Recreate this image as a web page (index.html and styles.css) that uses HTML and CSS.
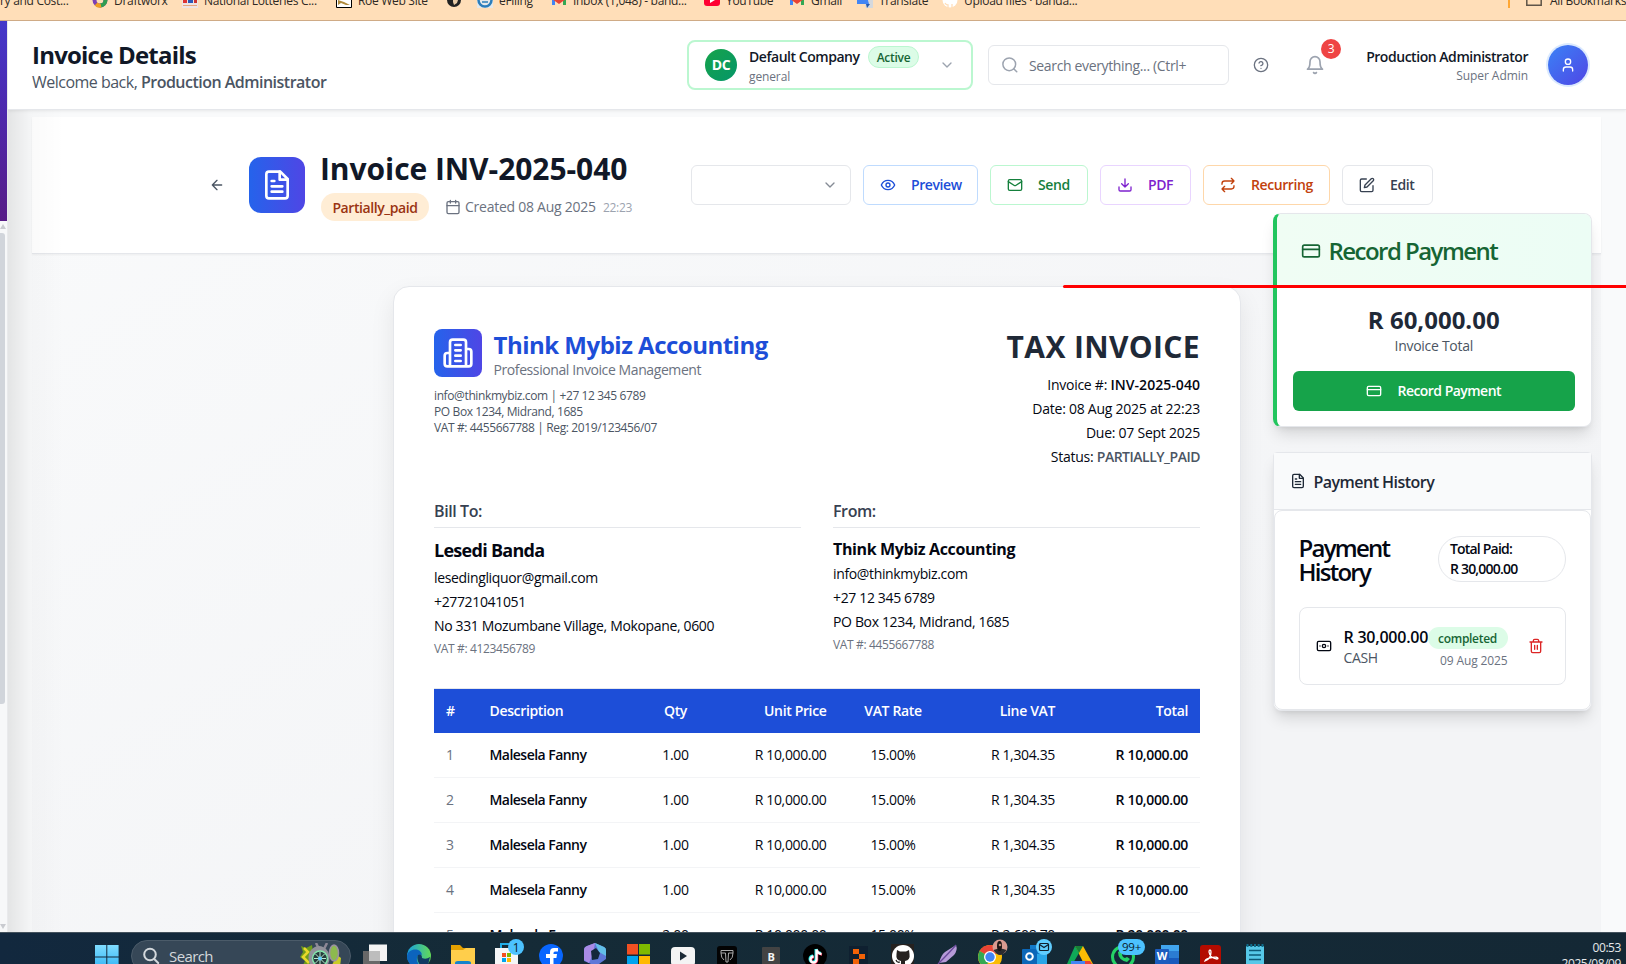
FILE: index.html
```html
<!DOCTYPE html>
<html lang="en">
<head>
<meta charset="utf-8">
<title>Invoice Details</title>
<link rel="stylesheet" href="styles.css">
</head>
<body>
<svg class="defs" width="0" height="0">
  <defs>
    <symbol id="file" viewBox="0 0 24 24"><path d="M14.5 2H6a2 2 0 0 0-2 2v16a2 2 0 0 0 2 2h12a2 2 0 0 0 2-2V7.5L14.5 2z"/><path d="M14 2v6h6M16 13H8M16 17H8M10 9H8"/></symbol>
    <symbol id="card" viewBox="0 0 24 24"><rect x="2" y="5" width="20" height="14" rx="2"/><path d="M2 10h20"/></symbol>
    <symbol id="down" viewBox="0 0 24 24"><path d="m6 9 6 6 6-6"/></symbol>
    <symbol id="gmail" viewBox="0 0 16 16"><path d="M1 4v9h3V6z" fill="#4285f4"/><path d="M15 4v9h-3V6z" fill="#34a853"/><path d="M1 3l7 5 7-5v4l-7 5-7-5z" fill="#ea4335"/></symbol>
  </defs>
</svg>
<div class="screen">
  <div class="bookmarks">
    <div class="bm"><span>ry and Cost...</span></div>
    <div class="bm"><svg viewBox="0 0 16 16"><circle cx="8" cy="8" r="5.5" fill="none" stroke="#7b3fb5" stroke-width="4"/><path d="M8 13.500A5.500 5.500 0 0 0 13.500 8" fill="none" stroke="#2f9e4f" stroke-width="4"/><path d="M4 12a5.500 5.500 0 0 0 5 1.500" fill="none" stroke="#f0a020" stroke-width="4"/></svg><span>Draftworx</span></div>
    <div class="bm"><svg viewBox="0 0 16 16"><path d="M0 0h16v16H0z" fill="#eee4e4"/><path d="M1 8h4v3H1z" fill="#d33"/><path d="M6 8h5v3H6z" fill="#2959b8"/><path d="M12 8h3v3h-3z" fill="#c33"/><path d="M1 13h14v1H1z" fill="#e8a67a"/></svg><span>National Lotteries C...</span></div>
    <div class="bm"><svg viewBox="0 0 16 16"><path d="M.5.5h15v15H.5z" fill="#fff" stroke="#000"/><path d="M2 8l6 2 6 3-4 0-5-2-3 2z" fill="#b08a3c"/></svg><span>Roe Web Site</span></div>
    <div class="bm"><svg viewBox="0 0 16 16"><circle cx="8" cy="8" r="7" fill="#222"/><path d="M7 7l5 1-1 3-3 2-1-3z" fill="#e8cba7"/></svg></div>
    <div class="bm"><svg viewBox="0 0 16 16"><path d="M0 0h16v16H0z" fill="#e4e8ea"/><circle cx="8" cy="8" r="6.500" fill="none" stroke="#2b7dbb" stroke-width="2.500"/><path d="M5 7h6M5 10h6" stroke="#2b7dbb" stroke-width="1.500"/></svg><span>eFiling</span></div>
    <div class="bm"><svg viewBox="0 0 16 16"><use href="#gmail"/></svg><span>Inbox (1,048) - band...</span></div>
    <div class="bm"><svg viewBox="0 0 16 16"><rect y="2" width="16" height="12" rx="3" fill="#f03"/><path d="M6 5l5 3-5 3z" fill="#fff"/></svg><span>YouTube</span></div>
    <div class="bm"><svg viewBox="0 0 16 16"><use href="#gmail"/></svg><span>Gmail</span></div>
    <div class="bm"><svg viewBox="0 0 16 16"><path d="M6 6h10v10H9z" fill="#d5d8dc"/><path d="M0 1h9l3 11H0z" fill="#4285f4"/><path d="M9 12l4 0-3 4z" fill="#2459b0"/></svg><span>Translate</span></div>
    <div class="bm"><svg viewBox="0 0 16 16"><circle cx="8" cy="8" r="7.500" fill="#fff"/><path d="M6 16v-3q-2 0-3-2M10 16v-4" stroke="#ffdeb8" fill="none" stroke-width="1.300"/></svg><span>Upload files · banda...</span></div>
    <div class="bm bm-all"><svg viewBox="0 0 16 16"><path d="M.8 2h14.400v11.200H.8z" fill="none" stroke="#5f5448" stroke-width="1.500"/></svg><span>All Bookmarks</span></div>
  </div>

  <div class="app">
    <aside class="sidebar"><div class="rail"></div><div class="track"><i class="up"></i><i class="thumb"></i><i class="dn"></i></div></aside>
    <div class="page">
      <header class="top">
        <div class="heading">
          <h1>Invoice Details</h1>
          <p>Welcome back, <b>Production Administrator</b></p>
        </div>
        <div class="company">
          <div class="dc">DC</div>
          <div class="company-text">
            <div class="company-row"><span class="company-name">Default Company</span><span class="active">Active</span></div>
            <div class="company-kind">general</div>
          </div>
          <svg class="ic i16 chev"><use href="#down"/></svg>
        </div>
        <div class="search">
          <svg class="ic i18" viewBox="0 0 24 24"><circle cx="11" cy="11" r="8.500"/><path d="m21 21-4-4"/></svg>
          <span>Search everything... (Ctrl+</span>
        </div>
        <svg class="ic i16 help" viewBox="0 0 24 24"><circle cx="12" cy="12" r="10"/><path d="M9.090 9a3 3 0 0 1 5.830 1c0 2-3 3-3 3M12 17h.01"/></svg>
        <div class="bell"><svg class="ic i20" viewBox="0 0 24 24"><path d="M6 8a6 6 0 0 1 12 0c0 7 3 9 3 9H3s3-2 3-9M10.300 21a1.940 1.940 0 0 0 3.400 0"/></svg><span>3</span></div>
        <div class="user"><div class="user-name">Production Administrator</div><div class="user-role">Super Admin</div></div>
        <div class="avatar"><svg class="ic i16" viewBox="0 0 24 24"><path d="M19 21v-2a4 4 0 0 0-4-4H9a4 4 0 0 0-4 4v2"/><circle cx="12" cy="7" r="4"/></svg></div>
      </header>

      <main class="main">
        <div class="canvas">
          <section class="panel">
            <svg class="ic i16 back" viewBox="0 0 24 24"><path d="m12 19-7-7 7-7M19 12H5"/></svg>
            <div class="panel-icon"><svg class="ic i32"><use href="#file"/></svg></div>
            <div class="panel-text">
              <h2>Invoice INV-2025-040</h2>
              <div class="panel-meta">
                <span class="partial">Partially_paid</span>
                <svg class="ic i16" viewBox="0 0 24 24"><rect x="3" y="4" width="18" height="18" rx="2"/><path d="M16 2v4M8 2v4M3 10h18"/></svg>
                <span class="created">Created 08 Aug 2025</span><span class="time">22:23</span>
              </div>
            </div>
            <div class="actions">
              <div class="select"><svg class="ic i16"><use href="#down"/></svg></div>
              <div class="btn preview"><svg class="ic i16" viewBox="0 0 24 24"><path d="M2 12s3-7 10-7 10 7 10 7-3 7-10 7-10-7-10-7Z"/><circle cx="12" cy="12" r="3"/></svg><span>Preview</span></div>
              <div class="btn send"><svg class="ic i16" viewBox="0 0 24 24"><rect x="2" y="4" width="20" height="16" rx="2"/><path d="m22 7-8.970 5.700a1.940 1.940 0 0 1-2.060 0L2 7"/></svg><span>Send</span></div>
              <div class="btn pdf"><svg class="ic i16" viewBox="0 0 24 24"><path d="M21 15v4a2 2 0 0 1-2 2H5a2 2 0 0 1-2-2v-4M7 10l5 5 5-5M12 15V3"/></svg><span>PDF</span></div>
              <div class="btn recurring"><svg class="ic i16" viewBox="0 0 24 24"><path d="m17 2 4 4-4 4M3 11v-1a4 4 0 0 1 4-4h14M7 22l-4-4 4-4M21 13v1a4 4 0 0 1-4 4H3"/></svg><span>Recurring</span></div>
              <div class="btn edit"><svg class="ic i16" viewBox="0 0 24 24"><path d="M11 3H4a2 2 0 0 0-2 2v15a2 2 0 0 0 2 2h15a2 2 0 0 0 2-2v-7"/><path d="M18.375 2.625a2.121 2.121 0 1 1 3 3L12 15l-4 1 1-4Z"/></svg><span>Edit</span></div>
            </div>
          </section>

          <div class="body">
            <article class="invoice">
              <div class="inv-head">
                <div>
                  <div class="brand">
                    <div class="brand-icon"><svg class="ic i32" viewBox="0 0 24 24"><path d="M6 22V4a2 2 0 0 1 2-2h8a2 2 0 0 1 2 2v18ZM6 12H4a2 2 0 0 0-2 2v6a2 2 0 0 0 2 2h2M18 9h2a2 2 0 0 1 2 2v9a2 2 0 0 1-2 2h-2M10 6h4M10 10h4M10 14h4M10 18h4"/></svg></div>
                    <div><div class="brand-name">Think Mybiz Accounting</div><div class="brand-sub">Professional Invoice Management</div></div>
                  </div>
                  <div class="brand-info"><div>info@thinkmybiz.com | +27 12 345 6789</div><div>PO Box 1234, Midrand, 1685</div><div>VAT #: 4455667788 | Reg: 2019/123456/07</div></div>
                </div>
                <div class="tax">
                  <h3>TAX INVOICE</h3>
                  <div>Invoice #: <b>INV-2025-040</b></div>
                  <div>Date: 08 Aug 2025 at 22:23</div>
                  <div>Due: 07 Sept 2025</div>
                  <div>Status: <b class="status">PARTIALLY_PAID</b></div>
                </div>
              </div>
              <div class="parties">
                <div class="party">
                  <h4>Bill To:</h4>
                  <div class="p-name big">Lesedi Banda</div>
                  <div class="p-line">lesedingliquor@gmail.com</div><div class="p-line">+27721041051</div><div class="p-line">No 331 Mozumbane Village, Mokopane, 0600</div>
                  <div class="p-vat">VAT #: 4123456789</div>
                </div>
                <div class="party">
                  <h4>From:</h4>
                  <div class="p-name">Think Mybiz Accounting</div>
                  <div class="p-line">info@thinkmybiz.com</div><div class="p-line">+27 12 345 6789</div><div class="p-line">PO Box 1234, Midrand, 1685</div>
                  <div class="p-vat">VAT #: 4455667788</div>
                </div>
              </div>
              <div class="items">
                <div class="row head"><span>#</span><span>Description</span><span class="c">Qty</span><span class="r">Unit Price</span><span class="c">VAT Rate</span><span class="r">Line VAT</span><span class="r">Total</span></div>
                <div class="row"><span class="n">1</span><span class="s d">Malesela Fanny</span><span class="c">1.00</span><span class="r">R 10,000.00</span><span class="c">15.00%</span><span class="r">R 1,304.35</span><span class="r s">R 10,000.00</span></div>
                <div class="row"><span class="n">2</span><span class="s d">Malesela Fanny</span><span class="c">1.00</span><span class="r">R 10,000.00</span><span class="c">15.00%</span><span class="r">R 1,304.35</span><span class="r s">R 10,000.00</span></div>
                <div class="row"><span class="n">3</span><span class="s d">Malesela Fanny</span><span class="c">1.00</span><span class="r">R 10,000.00</span><span class="c">15.00%</span><span class="r">R 1,304.35</span><span class="r s">R 10,000.00</span></div>
                <div class="row"><span class="n">4</span><span class="s d">Malesela Fanny</span><span class="c">1.00</span><span class="r">R 10,000.00</span><span class="c">15.00%</span><span class="r">R 1,304.35</span><span class="r s">R 10,000.00</span></div>
                <div class="row"><span class="n">5</span><span class="s d">Malesela Fanny</span><span class="c">2.00</span><span class="r">R 10,000.00</span><span class="c">15.00%</span><span class="r">R 2,608.70</span><span class="r s">R 20,000.00</span></div>
              </div>
            </article>

            <aside class="side">
              <section class="record">
                <div class="record-head"><svg class="ic i20"><use href="#card"/></svg><span>Record Payment</span></div>
                <div class="record-body">
                  <div class="amount">R 60,000.00</div>
                  <div class="amount-label">Invoice Total</div>
                  <div class="pay"><svg class="ic i16"><use href="#card"/></svg><span>Record Payment</span></div>
                </div>
              </section>
              <section class="history">
                <div class="history-head"><svg class="ic i16"><use href="#file"/></svg><span>Payment History</span></div>
                <div class="history-card">
                  <div class="history-top"><h3>Payment<br>History</h3><div class="paid">Total Paid:<br>R 30,000.00</div></div>
                  <div class="entry">
                    <svg class="ic i16" viewBox="0 0 24 24"><rect x="2" y="5" width="20" height="14" rx="2"/><circle cx="12" cy="12" r="2.500"/><path d="M6 12h.01M18 12h.01"/></svg>
                    <div class="entry-left"><div class="entry-sum">R 30,000.00</div><div class="entry-kind">CASH</div></div>
                    <div class="entry-right"><span class="done">completed</span><div class="entry-date">09 Aug 2025</div></div>
                    <svg class="ic i16 trash" viewBox="0 0 24 24"><path d="M3 6h18M19 6v14a2 2 0 0 1-2 2H7a2 2 0 0 1-2-2V6M8 6V4a2 2 0 0 1 2-2h4a2 2 0 0 1 2 2v2M10 11v6M14 11v6"/></svg>
                  </div>
                </div>
              </section>
            </aside>
          </div>
        </div>
      </main>
    </div>
  </div>

  <footer class="taskbar">
    <svg class="win" viewBox="0 0 24 20"><defs><linearGradient id="wg" x1="0" y1="0" x2="0" y2="1"><stop offset="0" stop-color="#7fdcff"/><stop offset="1" stop-color="#2fb3f5"/></linearGradient></defs><path d="M0 0h11.300v11.500H0zM12.300 0h11.300v11.500H12.300zM0 12.500h11.300v12H0zM12.300 12.500h11.300v12H12.300z" fill="url(#wg)"/></svg>
    <div class="tsearch">
      <svg class="ic i18" viewBox="0 0 18 18"><circle cx="8" cy="7.500" r="5.800"/><path d="M12.200 12l4 4"/></svg><span>Search</span>
      <svg class="flower" viewBox="0 0 44 24"><path d="M2 3l5 2 6-3 3 22H3l3-6-5-4 3-5z" fill="#6f9d1b"/><path d="M5 5l4 4-5 5 6 6" stroke="#e8d82c" stroke-width="2.500" fill="none"/><path d="M38 12l4 3-1 9h-9z" fill="#c9cc26"/><path d="M17 0l3 6M28 0l-3 6" stroke="#8d8795" stroke-width="2.500"/><ellipse cx="20" cy="15" rx="10.500" ry="12" fill="#92929b"/><circle cx="21" cy="15.500" r="7.500" fill="#253c3c" stroke="#84e6ac" stroke-width="1.500"/><path d="M21 9v13M15 15.500h12M16.500 11l9 9M25.500 11l-9 9" stroke="#b9ead0"/><circle cx="21" cy="15.500" r="2" fill="#62cfff"/><ellipse cx="35" cy="10" rx="4.500" ry="8" fill="#8db94e" stroke="#9b90a3" stroke-width="1.500"/></svg>
    </div>
    <div class="tray">
      <svg viewBox="-22 0 44 32"><path d="M-6 12.500h18V29H-6z" fill="#f4f4f4"/><path d="M-12 19H5v13h-17z" fill="#686868"/><path d="M-6 19H5v10H-6z" fill="#bdbdbd"/></svg>
      <svg viewBox="-22 0 44 32"><defs><linearGradient id="eg"><stop offset="0" stop-color="#17a0e0"/><stop offset="1" stop-color="#62d957"/></linearGradient></defs><circle cy="24" r="12" fill="url(#eg)"/><path d="M-12 24c1-8 14-9 15-1 0 0-6-2-5 6l3 6h-6q-7-4-7-11z" fill="#0c64bd"/><path d="M-1 23q4-2 4 3 4 2 8-1l-2 8H1q-4-6-2-10z" fill="#103a63"/></svg>
      <svg viewBox="-22 0 44 32"><path d="M-12 13h9l3 3h12v16h-24z" fill="#e5a100"/><path d="M-12 18H0l3-2h9v16h-24z" fill="#ffce4b"/><path d="M-8 32v-1q0-2 3-2H5q3 0 3 2v1z" fill="#1583cc"/></svg>
      <svg viewBox="-22 0 44 32"><path d="M-6 17v-5h11v5" fill="none" stroke="#20aee8" stroke-width="2"/><path d="M-12 16h23v16h-23z" fill="#f5f6f7"/><path d="M-5 21h4v4h-4z" fill="#f25022"/><path d="M0 21h4v4H0z" fill="#7fba00"/><path d="M-5 26h4v4h-4z" fill="#00a4ef"/><path d="M0 26h4v4H0z" fill="#ffb900"/><circle cx="9" cy="15" r="8" fill="#4cc2ff"/><text x="9" y="19.500" font-size="12" text-anchor="middle" fill="#0b1b2a">1</text></svg>
      <svg viewBox="-22 0 44 32"><circle cy="24" r="12" fill="#0866ff"/><path d="M-1 32v-6h-4v-4h4v-2q0-4 4-4h4v3.500H4q-1.500 0-1.500 1.500v1H6l-.6 4H2.500v6z" fill="#fff"/></svg>
      <svg viewBox="-22 0 44 32"><path d="M-11 18q0-3 3-4L0 11l9 4q2 1 2 3v9L4 32h-8l-7-3z" fill="#5e78d8"/><path d="M-11 18q0-3 3-4L0 11l-2 11-4 9-5-3z" fill="#a98be6"/><path d="M0 11l9 4q2 1 2 3v6L4 20z" fill="#62bfe8"/><path d="M-4 19l5-3 4 5-2 6-6 1z" fill="#14283a"/></svg>
      <svg viewBox="-22 0 44 32"><path d="M-12 12h11v10.500h-11z" fill="#f25022"/><path d="M0 12h11v10.500H0z" fill="#7fba00"/><path d="M-12 24h11v10h-11z" fill="#00a4ef"/><path d="M0 24h11v10H0z" fill="#ffb900"/></svg>
      <svg viewBox="-22 0 44 32"><rect x="-12" y="15" width="24" height="19" rx="4" fill="#f4f4f4"/><path d="M-3 19.500l7 4.500-7 4.500z" fill="#1c2a36"/></svg>
      <svg viewBox="-22 0 44 32"><rect x="-10" y="14" width="20" height="22" rx="3" fill="#030303"/><path d="M-6 18.500H6v2.500H1.500l-.5 9h-2l-.5-9H-6zM-6 21q0 5 3 7M6 21q0 5-3 7" stroke="#aaa" fill="none"/></svg>
      <svg viewBox="-22 0 44 32"><rect x="-9" y="15" width="18" height="20" rx="1" fill="#434343"/><text y="28.500" font-size="11" font-weight="700" text-anchor="middle" fill="#f4f4f4">B</text></svg>
      <svg viewBox="-22 0 44 32"><circle cy="24" r="12" fill="#000"/><path d="M1 17v10a3 3 0 1 1-3-3M1 17q1 4 5 4.500" stroke="#25f4ee" stroke-width="3" fill="none"/><path d="M2 18v10a3 3 0 1 1-3-3M2 18q1 4 5 4.500" stroke="#fe2c55" stroke-width="2.500" fill="none"/><path d="M1.500 17.500v10a3 3 0 1 1-3-3M1.500 17.500q1 4 5 4.500" stroke="#fff" stroke-width="2.300" fill="none"/></svg>
      <svg viewBox="-22 0 44 32"><path d="M-10 14H9v18h-19z" fill="#0f2030"/><path d="M-6 17H0v5h-6zM0 22h6v5H0zM-6 27H0v5h-6z" fill="#f26207"/></svg>
      <svg viewBox="-22 0 44 32"><path d="M-12 12h23v20h-23z" fill="#25211f"/><circle cy="24" r="11" fill="#fff"/><path d="M-6 18l3 1.500h6L6 18l.5 4q1 6-4.500 7v3h-4v-3q-5.500-1-4.500-7z" fill="#25211f"/><path d="M-3 30q-3 1-4-2" stroke="#25211f" fill="none" stroke-width="1.300"/></svg>
      <svg viewBox="-22 0 44 32"><path d="M9 13q2 5-2 10l-8 7-7 1q2-8 6-11z" fill="#b69bd8"/><path d="M9 13q-7 8-18 19" stroke="#6a4a9c" fill="none" stroke-width="1.300"/></svg>
      <svg viewBox="-22 0 44 32"><circle cx="-1" cy="25" r="12" fill="#fbbc04"/><path d="M-1 25l-10.400-6A12 12 0 0 1 9.400 19z" fill="#ea4335"/><path d="M-1 25l-10.400-6A12 12 0 0 0-5 36z" fill="#34a853"/><circle cx="-1" cy="25" r="6" fill="#fff"/><circle cx="-1" cy="25" r="4.700" fill="#4285f4"/><circle cx="9" cy="15" r="7.500" fill="#d99a90"/><path d="M2.500 18q6.500-3 13 0-3 5-6.500 5t-6.500-5z" fill="#2c2c30"/><ellipse cx="8.500" cy="14" rx="2.500" ry="5" fill="#1c1515"/><circle cx="9" cy="13" r="1.300" fill="#b88470"/></svg>
      <svg viewBox="-22 0 44 32"><path d="M-5 13H8v10H-5z" fill="#1279c8"/><path d="M-3 22h15v12H-3z" fill="#29a6e8"/><rect x="-13" y="17" width="15" height="16" rx="1" fill="#0b67b8"/><circle cx="-5.500" cy="24.500" r="3.300" stroke="#fff" fill="none" stroke-width="2"/><circle cx="9" cy="15" r="8" fill="#60cdff"/><rect x="4.500" y="11.500" width="9" height="7" rx="1" fill="none" stroke="#10202e" stroke-width="1.200"/><path d="M4.500 12.500l4.500 3 4.500-3" fill="none" stroke="#10202e" stroke-width="1.200"/></svg>
      <svg viewBox="-22 0 44 32"><path d="M-4 14h8l10 18H5z" fill="#fbbc04"/><path d="M-4 14l4 7-7 12-5-1z" fill="#0fa958"/><path d="M-4 14h8l-4 7z" fill="#188038"/><path d="M-8 29H8l-2 4H-8z" fill="#4285f4"/><path d="M6 29h5l2 3H6z" fill="#ea4335"/></svg>
      <svg viewBox="-22 0 44 32"><circle cy="25" r="10.500" fill="#14283a" stroke="#25d366" stroke-width="3"/><path d="M-5 20q0 8 9 10l3-3-3-2-2 1q-3-1-3-4l1-1-2-3z" fill="#25d366"/><rect x="-5" y="7" width="27" height="16" rx="8" fill="#4cc2ff"/><text x="8.500" y="19" font-size="11.500" text-anchor="middle" fill="#0b1b2a">99+</text></svg>
      <svg viewBox="-22 0 44 32"><path d="M-6 13h18v7H-6z" fill="#41a5ee"/><path d="M-6 19h18v7H-6z" fill="#2b7cd3"/><path d="M-6 26h18v7H-6z" fill="#185abd"/><rect x="-12" y="17" width="14" height="16" rx="1" fill="#1b5cbe"/><text x="-5" y="28" font-size="11" font-weight="700" text-anchor="middle" fill="#fff">W</text></svg>
      <svg viewBox="-22 0 44 32"><rect x="-11" y="13" width="21" height="24" rx="3" fill="#b30b00"/><path d="M-6 29q6-2 6-9 0-2-1-2t-1 2q1 6 8 7 1 0 1-.5 0-2-6-1-6 1-7 3.500z" stroke="#fff" fill="none" stroke-width="1.300"/></svg>
      <svg viewBox="-22 0 44 32"><path d="M-9 14H9v18H-9z" fill="#56c8e8"/><path d="M-7.500 12v3M-3.700 12v3M0 12v3M3.700 12v3M7.500 12v3" stroke="#0f6d8a" stroke-width="2"/><path d="M-6 18.500H6M-6 23H6M-6 27.500H6" stroke="#0d5a78" stroke-width="1.500"/></svg>
    </div>
    <div class="clock"><div>00:53</div><div>2025/08/09</div></div>
  </footer>
  <div class="marker"></div>
</div>
</body>
</html>
```
FILE: styles.css
```css
* { box-sizing: border-box; margin: 0; padding: 0; letter-spacing: -0.025em; }
body { font-family: "Open Sans", "Noto Sans", sans-serif; font-size: 14px; line-height: 20px; color: #030712; background: #fff; overflow: hidden; }
.defs { position: absolute; }
.screen { position: relative; width: 1626px; height: 964px; overflow: hidden; display: flex; flex-direction: column; }
.ic { fill: none; stroke: currentColor; stroke-width: 2; stroke-linecap: round; stroke-linejoin: round; flex: none; display: block; }
.i16 { width: 16px; height: 16px; }
.i18 { width: 18px; height: 18px; }
.i20 { width: 20px; height: 20px; }
.i32 { width: 32px; height: 32px; }

.bookmarks { height: 21px; flex: none; background: #ffdeb8; border-bottom: 1px solid #cfab86; display: grid; grid-template-columns: 92px 90px 154px 110px 31px 74px 153px 85px 68px 85px 566px 118px; font-size: 12px; color: #2e2924; overflow: hidden; }
.bm { display: flex; gap: 6px; height: 16px; margin-top: -8px; white-space: nowrap; line-height: 17px; }
.bm svg { width: 16px; height: 16px; flex: none; }
.bm-all { border-left: 2px solid #ffa734; padding-left: 16px; gap: 8px; }

.app { display: grid; grid-template-columns: 8px 1618px; height: 911px; flex: none; }
.sidebar { border-right: 1px solid #e9eaec; display: flex; flex-direction: column; }
.rail { height: 200px; background: linear-gradient(#4338ca, #4c2ab0 40%, #581c87); }
.track { flex: 1; background: #f7f8f9; display: flex; flex-direction: column; }
.up { margin-top: 3px; border: 3px solid transparent; border-bottom: 5px solid #c9cbd0; border-top: 0; width: 6px; margin-bottom: 4px; }
.thumb { width: 5px; height: 471px; background: #d1d5db; border-radius: 0 3px 3px 0; }
.dn { margin-top: auto; margin-bottom: 3px; border: 3px solid transparent; border-top: 5px solid #c9cbd0; border-bottom: 0; width: 6px; }
.page { height: 911px; overflow: hidden; display: flex; flex-direction: column; }

.top { height: 89px; flex: none; display: flex; align-items: center; padding-left: 24px; background: #fff; border-bottom: 1px solid #e5e7eb; box-shadow: 0 1px 3px rgba(0,0,0,.08); position: relative; z-index: 2; }
.heading { width: 655px; padding-top: 2px; }
.heading h1 { font-size: 24px; line-height: 32px; font-weight: 700; color: #111827; letter-spacing: -0.033em; }
.heading p { font-size: 16px; line-height: 23px; color: #4b5563; letter-spacing: -0.032em; }
.heading b { font-weight: 600; letter-spacing: -0.032em; }
.company { width: 286px; height: 50px; border: 2px solid #bbf7d0; border-radius: 8px; display: flex; align-items: center; padding-left: 16px; margin-right: 15px; }
.dc { width: 32px; height: 32px; border-radius: 50%; background: linear-gradient(135deg, #16a34a, #059669); color: #fff; font-weight: 700; text-align: center; line-height: 32px; margin-right: 12px; }
.company-text { width: 193px; }
.company-row { display: flex; height: 22px; align-items: center; gap: 8px; }
.company-name { font-weight: 600; color: #111827; width: 111px; white-space: nowrap; letter-spacing: -0.033em; line-height: 22px; }
.active { width: 51px; height: 22px; border: 1px solid #bbf7d0; border-radius: 11px; background: #dcfce7; color: #166534; font-size: 12px; line-height: 21px; font-weight: 600; text-align: center; }
.company-kind { font-size: 12px; line-height: 18px; height: 16px; color: #6b7280; font-weight: 500; letter-spacing: -0.01em; }
.chev { color: #9ca3af; margin-left: -3px; }
.search { width: 241px; height: 40px; border: 1px solid #e5e7eb; border-radius: 6px; display: flex; align-items: center; padding-left: 12px; gap: 10px; color: #6b7280; }
.search span { line-height: 22px; padding-top: 2px; }
.search .ic { color: #9ca3af; }
.help { color: #6b7280; margin-left: 24px; }
.bell { position: relative; color: #9ca3af; margin-left: 36px; }
.bell span { position: absolute; left: 16px; top: -16px; width: 20px; height: 20px; border-radius: 50%; background: #ef4444; color: #fff; font-size: 12px; text-align: center; line-height: 20px; }
.user { width: 203px; text-align: right; padding-top: 1px; }
.user-name { font-weight: 600; color: #111827; line-height: 20px; letter-spacing: -0.033em; }
.user-role { font-size: 12px; line-height: 17px; color: #6b7280; font-weight: 500; letter-spacing: -0.005em; }
.avatar { width: 40px; height: 40px; border-radius: 50%; margin-left: 20px; background: linear-gradient(135deg, #3b82f6, #4f46e5); box-shadow: 0 0 0 2px #dbeafe; color: #fff; display: flex; align-items: center; justify-content: center; }

.main { flex: 1; position: relative; background: #f9fafb; padding: 7px 0 0 24px; }
.main::after { content: ""; position: absolute; left: 0; top: 0; width: 56px; height: 100%; background: linear-gradient(90deg, rgba(0,0,0,.085), rgba(0,0,0,.02) 40%, rgba(0,0,0,0)); }
.canvas { width: 1569px; height: 815px; background: linear-gradient(150deg, #f9fafb, #f3f4f6 75%); }
.panel { height: 137px; background: #fff; border-bottom: 1px solid #e5e7eb; box-shadow: 0 1px 2px rgba(0,0,0,.05); display: flex; align-items: center; padding-left: 177px; }
.back { color: #4b5563; margin-right: 24px; }
.panel-icon { width: 56px; height: 56px; border-radius: 12px; background: linear-gradient(90deg, #2563eb, #4f46e5); color: #fff; display: flex; align-items: center; justify-content: center; margin-right: 16px; }
.panel-text { width: 370px; }
.panel-text h2 { font-size: 30px; line-height: 40px; height: 36px; font-weight: 700; color: #111827; margin-bottom: 8px; white-space: nowrap; letter-spacing: -0.002em; margin-left: -1px; }
.panel-meta { display: flex; align-items: center; color: #6b7280; height: 28px; }
.partial { width: 108px; height: 28px; line-height: 29px; border-radius: 14px; background: #ffedd5; color: #9a3412; font-weight: 600; text-align: center; margin-right: 16px; letter-spacing: -0.03em; }
.created { margin-left: 4px; width: 138px; white-space: nowrap; letter-spacing: -0.018em; line-height: 22px; }
.time { font-size: 12px; color: #9ca3af; line-height: 22px; padding-top: 1px; }
.actions { display: flex; gap: 12px; }
.select, .btn { height: 40px; border: 1px solid #e5e7eb; border-radius: 6px; display: flex; align-items: center; }
.select { width: 160px; justify-content: flex-end; padding-right: 12px; color: #858b95; }
.btn { padding-left: 16px; gap: 15px; font-weight: 600; }
.btn span { letter-spacing: -0.03em; }
.preview { width: 115px; border-color: #bfdbfe; color: #1d4ed8; }
.send { width: 98px; border-color: #bbf7d0; color: #15803d; }
.pdf { width: 91px; border-color: #e9d5ff; color: #7e22ce; }
.recurring { width: 127px; border-color: #fed7aa; color: #c2410c; }
.edit { width: 91px; color: #374151; }

.body { display: flex; padding: 32px 0 0 361px; height: 678px; }
.invoice { width: 848px; height: 700px; flex: none; background: #fff; border: 1px solid #e5e7eb; border-radius: 16px; box-shadow: 0 10px 25px rgba(0,0,0,.08); padding: 42px 40px 0 40px; }
.inv-head { display: flex; justify-content: space-between; height: 168px; }
.brand { display: flex; gap: 11.500px; height: 48px; }
.brand-icon { width: 48px; height: 48px; border-radius: 8px; background: linear-gradient(90deg, #2563eb, #4f46e5); color: #fff; display: flex; align-items: center; justify-content: center; }
.brand-name { font-size: 24px; line-height: 31px; height: 32px; font-weight: 700; color: #1d4ed8; white-space: nowrap; letter-spacing: -0.021em; }
.brand-sub { line-height: 17px; color: #6b7280; letter-spacing: -0.029em; }
.brand-info { margin-top: 11px; font-size: 12px; line-height: 16px; color: #4b5563; }
.brand-info div { letter-spacing: -0.032em; }
.tax { text-align: right; line-height: 24px; }
.tax div { letter-spacing: -0.018em; }
.tax h3 { font-size: 30px; line-height: 35px; height: 36px; font-weight: 700; color: #1f2937; letter-spacing: 0.012em; margin-bottom: 8px; }
.tax b { font-weight: 600; letter-spacing: 0.003em; }
.tax .status { color: #4b5563; letter-spacing: -0.035em; }
.parties { display: grid; grid-template-columns: 367px 367px; gap: 32px; height: 191px; }
.party h4 { font-size: 16px; line-height: 25px; height: 29px; font-weight: 600; color: #374151; border-bottom: 1px solid #e5e7eb; margin-top: 2px; margin-bottom: 9px; }
.p-name { font-size: 16px; line-height: 24px; font-weight: 700; margin-bottom: 1px; letter-spacing: -0.023em; }
.p-name.big { font-size: 18px; line-height: 27px; height: 28px; letter-spacing: -0.04em; }
.p-line { line-height: 24px; }
.p-vat { font-size: 12px; line-height: 21px; color: #6b7280; letter-spacing: -0.03em; }
.items { border-top: 1px solid #e5e7eb; }
.row { display: grid; grid-template-columns: 43.500px 161.500px 73px 126.500px 109px 119.500px 133px; height: 45px; line-height: 44px; border-bottom: 1px solid #f3f4f6; }
.row span { padding: 0 12px; white-space: nowrap; }
.row .c { text-align: center; }
.row .r { text-align: right; }
.row .s { font-weight: 600; }
.row .d { letter-spacing: -0.038em; }
.row .n { color: #6b7280; }
.row.head { height: 44px; border: 0; background: #1d4ed8; color: #fff; font-weight: 600; }

.side { width: 319.500px; flex: none; margin: -73px 0 0 31.500px; }
.record { height: 214px; background: #fff; border: 1px solid #e5e7eb; border-left: 4px solid #22c55e; border-radius: 8px; box-shadow: 0 10px 15px -3px rgba(0,0,0,.13), 0 4px 6px -4px rgba(0,0,0,.12); overflow: hidden; }
.record-head { height: 72px; background: linear-gradient(90deg, #f0fdf4, #ecfdf5); display: flex; align-items: center; gap: 8px; padding: 2px 0 0 24px; font-size: 24px; line-height: 24px; font-weight: 600; color: #166534; }
.record-head span { letter-spacing: -0.064em; }
.record-body { padding: 19px 16px 0; text-align: center; }
.amount { font-size: 24px; line-height: 32px; font-weight: 700; color: #1f2937; margin-top: -1px; letter-spacing: 0; }
.amount-label { color: #4b5563; line-height: 19px; letter-spacing: -0.02em; }
.pay { height: 40px; margin-top: 16px; border-radius: 6px; background: #16a34a; color: #fff; font-weight: 600; display: flex; align-items: center; justify-content: center; gap: 15px; }
.pay span { letter-spacing: -0.038em; }
.history { margin-top: 25px; height: 259px; background: #fff; border: 1px solid #e5e7eb; border-radius: 4px 4px 8px 8px; box-shadow: 0 10px 15px -3px rgba(0,0,0,.13), 0 4px 6px -4px rgba(0,0,0,.12); }
.history-head { height: 57px; background: #f9fafb; border-bottom: 1px solid #e5e7eb; display: flex; align-items: center; gap: 8px; padding-left: 16px; font-size: 16px; font-weight: 600; color: #1f2937; }
.history-head span { line-height: 24px; padding-top: 1px; letter-spacing: -0.033em; }
.history-card { height: 200px; border: 1px solid #e5e7eb; border-radius: 8px; padding: 25px 24px 0; }
.history-top { display: flex; justify-content: space-between; align-items: center; height: 47px; }
.history-top h3 { font-size: 24px; line-height: 24px; font-weight: 600; letter-spacing: -0.073em; }
.paid { width: 128px; height: 46px; border: 1px solid #e5e7eb; border-radius: 23px; padding: 2px 11px; font-weight: 600; letter-spacing: -0.058em; margin-top: -1px; }
.entry { margin-top: 24px; height: 78px; border: 1px solid #e5e7eb; border-radius: 8px; display: flex; align-items: center; padding-left: 16px; }
.entry-left { width: 84px; margin-left: 12px; padding-top: 2px; }
.entry-sum { font-size: 16px; line-height: 22px; font-weight: 600; white-space: nowrap; letter-spacing: -0.014em; }
.entry-kind { color: #4b5563; }
.entry-right { width: 80px; text-align: right; padding-top: 5px; }
.done { display: block; width: 80px; height: 22px; border-radius: 11px; background: #dcfce7; color: #166534; font-size: 12px; line-height: 23px; font-weight: 600; text-align: center; }
.entry-date { margin-top: 3px; font-size: 12px; line-height: 18px; color: #6b7280; letter-spacing: -0.01em; }
.trash { color: #dc2626; margin-left: 20px; }

.taskbar { height: 32px; flex: none; background: linear-gradient(90deg, #12283e, #152b37 30%, #142835); border-top: 1px solid #44525d; display: flex; overflow: hidden; color: #e4e8eb; }
.win { width: 24px; height: 20px; margin: 12px 12px 0 95px; }
.tsearch { width: 220px; height: 32px; margin-top: 7px; border-radius: 16px; background: #364757; border: 1px solid #4b5b69; display: flex; padding: 5px 0 0 10px; gap: 9px; font-size: 15px; color: #d3d8dc; flex: none; }
.tsearch .ic { margin-top: 1px; }
.tsearch span { width: 121px; letter-spacing: -0.04em; }
.tsearch .flower { width: 44px; height: 24px; margin-top: -3px; flex: none; }
.tray { display: flex; margin-left: 2px; }
.tray svg { width: 44px; height: 32px; margin-top: -1px; flex: none; }
.clock { margin-left: auto; padding: 7px 5px 0 0; text-align: right; font-size: 12px; line-height: 16px; }
.clock div { letter-spacing: -0.035em; }
.marker { position: absolute; left: 1063px; top: 285px; width: 563px; height: 3px; background: #f00; border-radius: 2px 0 0 2px; z-index: 5; }
```
